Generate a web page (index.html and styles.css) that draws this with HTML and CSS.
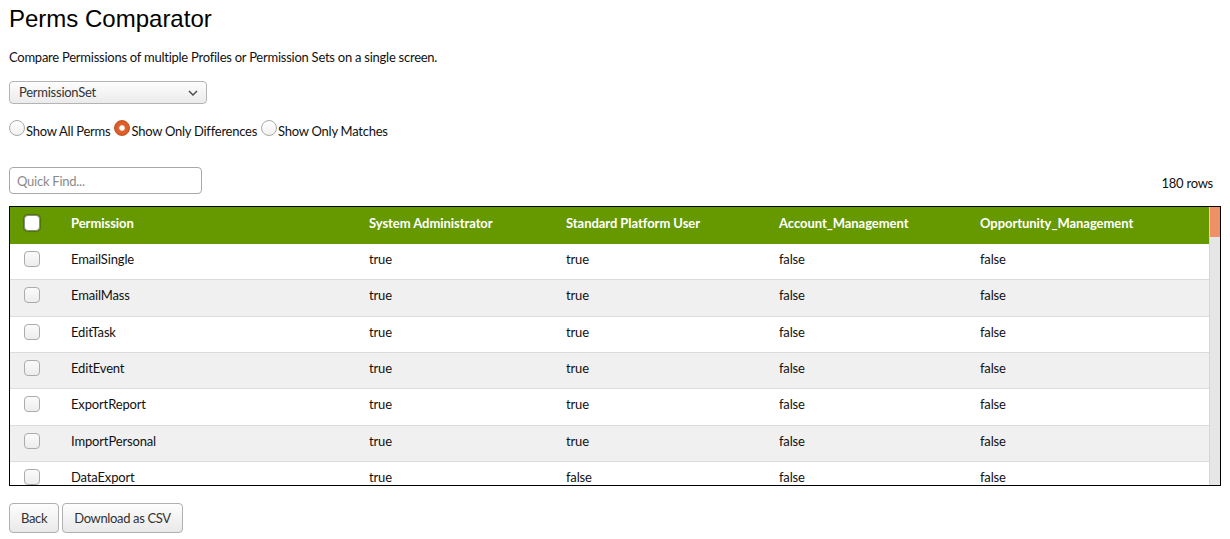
FILE: index.html
```html
<!DOCTYPE html>
<html lang="en">
<head>
<meta charset="utf-8">
<title>Perms Comparator</title>
<link rel="stylesheet" href="styles.css">
</head>
<body>
<h1 class="page-title">Perms Comparator</h1>
<p class="intro">Compare Permissions of multiple Profiles or Permission Sets on a single screen.</p>

<div class="select-wrap">
  <select class="type-select">
    <option>PermissionSet</option>
    <option>Profile</option>
  </select>
  <svg class="chevron" width="10" height="6" viewBox="0 0 10 6"><path d="M1 1 L5 5 L9 1" fill="none" stroke="#444" stroke-width="1.4"/></svg>
</div>

<div class="mode-row">
  <label class="mode"><input type="radio" name="mode" class="radio">Show All Perms</label>
  <label class="mode"><input type="radio" name="mode" class="radio" checked>Show Only Differences</label>
  <label class="mode"><input type="radio" name="mode" class="radio">Show Only Matches</label>
</div>

<div class="find-row">
  <input type="text" class="quick-find" placeholder="Quick Find...">
  <span class="row-count">180 rows</span>
</div>

<div class="table-frame">
  <div class="table-scroll">
    <table class="perm-table">
      <colgroup>
        <col class="c-check"><col class="c-perm"><col class="c-sys"><col class="c-std"><col class="c-acc"><col class="c-opp">
      </colgroup>
      <thead>
        <tr>
          <th><input type="checkbox" class="check check-head"></th>
          <th>Permission</th>
          <th>System Administrator</th>
          <th>Standard Platform User</th>
          <th>Account_Management</th>
          <th>Opportunity_Management</th>
        </tr>
      </thead>
      <tbody>
        <tr><td><input type="checkbox" class="check"></td><td>EmailSingle</td><td>true</td><td>true</td><td>false</td><td>false</td></tr>
        <tr><td><input type="checkbox" class="check"></td><td>EmailMass</td><td>true</td><td>true</td><td>false</td><td>false</td></tr>
        <tr><td><input type="checkbox" class="check"></td><td>EditTask</td><td>true</td><td>true</td><td>false</td><td>false</td></tr>
        <tr><td><input type="checkbox" class="check"></td><td>EditEvent</td><td>true</td><td>true</td><td>false</td><td>false</td></tr>
        <tr><td><input type="checkbox" class="check"></td><td>ExportReport</td><td>true</td><td>true</td><td>false</td><td>false</td></tr>
        <tr><td><input type="checkbox" class="check"></td><td>ImportPersonal</td><td>true</td><td>true</td><td>false</td><td>false</td></tr>
        <tr><td><input type="checkbox" class="check"></td><td>DataExport</td><td>true</td><td>false</td><td>false</td><td>false</td></tr>
      </tbody>
    </table>
  </div>
  <div class="scrollbar"><div class="scroll-thumb"></div></div>
</div>

<div class="actions">
  <button class="btn">Back</button>
  <button class="btn">Download as CSV</button>
</div>
</body>
</html>
```

FILE: styles.css
```css
html, body {
  margin: 0;
  padding: 0;
  background: #fff;
}
body {
  padding: 0 9px;
  font-family: Lato, "Noto Sans", sans-serif;
  font-size: 13px;
  letter-spacing: -0.25px;
  color: #111;
}
.page-title {
  font-family: "Liberation Sans", Arial, sans-serif;
  font-weight: normal;
  font-size: 24px;
  line-height: 28px;
  letter-spacing: 0;
  margin: 5px 0 0;
  color: #000;
}
.intro {
  margin: 15px 0 0;
  line-height: 18px;
}
.select-wrap {
  position: relative;
  width: 198px;
  margin-top: 15px;
}
.type-select {
  appearance: none;
  -webkit-appearance: none;
  display: block;
  width: 198px;
  height: 23px;
  box-sizing: border-box;
  border: 1px solid #b4b4b4;
  border-radius: 4px;
  background: linear-gradient(#fdfdfd, #ebebeb);
  font-family: inherit;
  font-size: 13px;
  letter-spacing: inherit;
  color: #333;
  padding: 0 0 1px 9px;
  margin: 0;
}
.chevron {
  position: absolute;
  right: 9px;
  top: 9px;
  pointer-events: none;
}
.mode-row {
  margin-top: 18px;
  line-height: 18px;
  display: flex;
  gap: 4px;
}
.mode {
  display: inline-flex;
  align-items: flex-start;
  color: #111;
}
.radio {
  appearance: none;
  -webkit-appearance: none;
  width: 16px;
  height: 16px;
  box-sizing: border-box;
  border: 1px solid #a9a9a9;
  border-radius: 50%;
  background: linear-gradient(#fff, #f1f1f1);
  margin: -2px 1px 0 0;
}
.radio:checked {
  border-color: #c4501f;
  background: radial-gradient(circle, #fff 0, #fff 2.3px, #e0622f 3.2px, #d9531e 100%);
}
.find-row {
  display: flex;
  justify-content: space-between;
  align-items: center;
  margin-top: 27px;
  padding-right: 8px;
}
.quick-find {
  width: 193px;
  height: 27px;
  box-sizing: border-box;
  border: 1px solid #a8a8a8;
  border-radius: 4px;
  padding: 0 7px;
  font-family: inherit;
  font-size: 13px;
  letter-spacing: inherit;
  margin: 0;
  color: #333;
}
.quick-find::placeholder {
  color: #8a8a8a;
}
.row-count {
  color: #111;
  padding-top: 4px;
}
.table-frame {
  margin-top: 12px;
  border: 1px solid #000;
  height: 278px;
  display: flex;
}
.table-scroll {
  flex: 1;
  overflow: hidden;
}
.scrollbar {
  width: 10px;
  flex: none;
  background: #e6e6e6;
  border-left: 1px solid #d6d6d6;
}
.scroll-thumb {
  height: 30px;
  background: #f09069;
}
.perm-table {
  width: 100%;
  table-layout: fixed;
  border-collapse: collapse;
}
.c-check { width: 47px; }
.c-perm { width: 298px; }
.c-sys { width: 197px; }
.c-std { width: 213px; }
.c-acc { width: 201px; }
.perm-table th {
  background: #669900;
  color: #fff;
  font-weight: bold;
  letter-spacing: -0.05px;
  text-align: left;
  padding: 0 14px 5px;
  line-height: 16px;
  height: 37px;
  box-sizing: border-box;
}
.perm-table td {
  padding: 7px 14px 12.33px;
  line-height: 16px;
  letter-spacing: -0.15px;
  border-bottom: 1px solid #dcdcdc;
  color: #111;
  white-space: nowrap;
}
.perm-table tbody tr:nth-child(even) td {
  background: #f0f0f0;
}
.check {
  appearance: none;
  -webkit-appearance: none;
  display: block;
  width: 16px;
  height: 16px;
  box-sizing: border-box;
  border: 1px solid #ababab;
  border-radius: 4px;
  background: linear-gradient(#fbfbfb, #ededed);
  margin: 0;
}
.check-head {
  background: #fff;
  border-color: #8c8c8c;
  box-shadow: 0 0 1px 1px rgba(0,0,0,0.25);
}
.actions {
  display: flex;
  gap: 3px;
  margin-top: 17px;
}
.btn {
  height: 30px;
  box-sizing: border-box;
  padding: 0 11px;
  border: 1px solid #b0b0b0;
  border-radius: 4px;
  background: linear-gradient(#fdfdfd, #e9e9e9);
  font-family: inherit;
  font-size: 13px;
  letter-spacing: -0.35px;
  color: #333;
  margin: 0;
}
```
